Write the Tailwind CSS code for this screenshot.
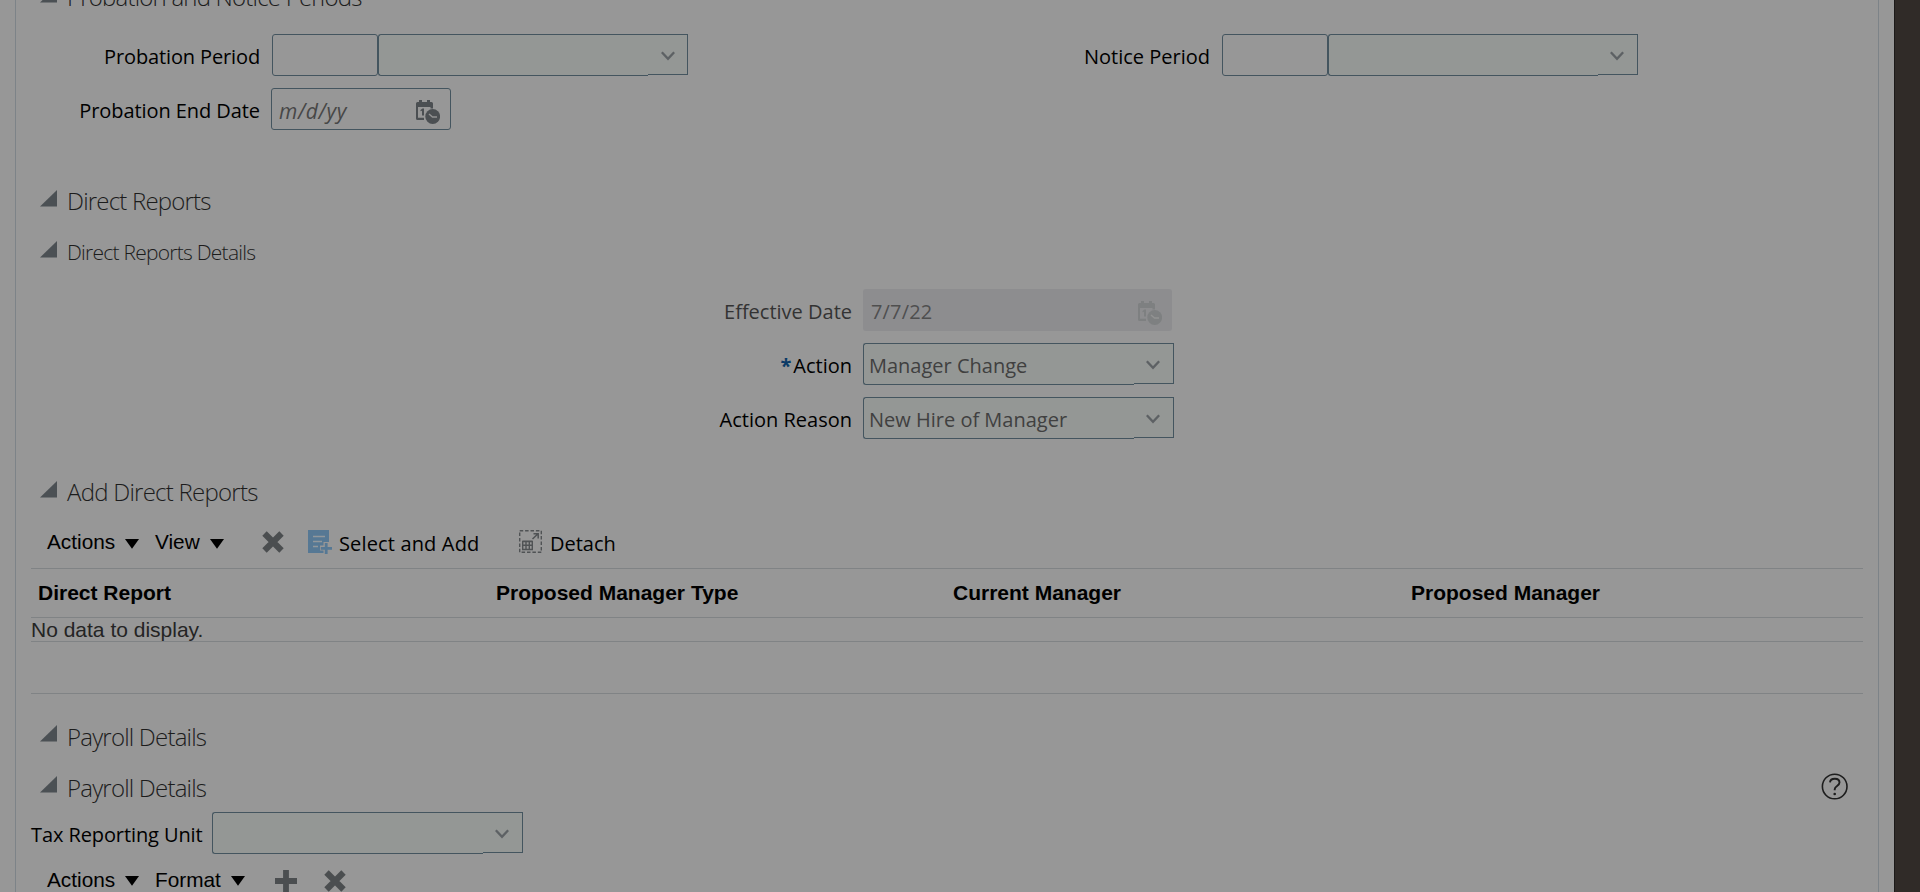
<!DOCTYPE html>
<html lang="en">
<head>
<meta charset="utf-8">
<title>Employment Details</title>
<script src="https://cdn.jsdelivr.net/npm/@tailwindcss/browser@4"></script>
</head>
<body class="h-[892px] overflow-hidden bg-[#302b28] font-['Open_Sans','Noto_Sans',sans-serif] text-[20px] text-black">
<svg class="hidden">
  <symbol id="tri" viewBox="0 0 17 17"><path d="M17 0V16.5H0Z" fill="#4b5054"/></symbol>
  <symbol id="chev" viewBox="0 0 14 10"><path d="M.8 1.200L7 7.800L13.200 1.200" fill="none" stroke="#5d6164" stroke-width="2.400"/></symbol>
  <symbol id="down" viewBox="0 0 14 10"><path d="M0 0H14L7 9.8Z" fill="#000"/></symbol>
  <symbol id="cross" viewBox="0 0 22 22"><path d="M2.500 2.500L19.500 19.500M19.500 2.500L2.500 19.500" stroke="#4b4e50" stroke-width="6.200"/></symbol>
  <symbol id="cal" viewBox="0 0 24 24">
    <path d="M0 3.500Q0 2 1.500 2H3V0H6V2H11V0H14V2H15.500Q17 2 17 3.500V8.500H14.500V7H2V17.700H8V20H1.500Q0 20 0 18.500Z" fill="currentColor"/>
    <path d="M4.500 10L6.500 8.500H8V15.500H6V10.700L4.500 11.300Z" fill="currentColor"/>
    <circle cx="16.700" cy="16.500" r="7.400" fill="currentColor"/>
    <path d="M13 14L16.500 17H21" fill="none" class="stroke-[#929292]" stroke-width="1.500"/>
  </symbol>
</svg>
<div class="flex h-full w-[1895px] border-r border-[#1c1a19] bg-[#979797] pl-[15px]">
  <main class="flex h-full w-[1864px] flex-col border-x border-[#7d8388] pr-[15px] pl-[15px]">

    <div class="-mt-[19px] flex h-8 shrink-0 pl-[9px] text-[24px] leading-8 font-light tracking-[-0.8px] text-[#1c1c1c]">
      <svg class="mt-[5px] mr-[10px] size-[17px]"><use href="#tri"/></svg><h2>Probation and Notice Periods</h2>
    </div>

    <div class="mt-[21px] flex h-[42px] shrink-0">
      <div class="w-[229px] pt-[2px] text-right leading-[42px] tracking-[-0.13px]">Probation Period</div>
      <div class="ml-[12px] w-[106px] rounded-[3px] border border-[#44555f]"></div>
      <div class="-ml-px flex w-[311px] pl-px">
        <div class="w-[271px] rounded-l-[3px] border border-r-0 border-[#44555f] bg-[#949795]"></div>
        <div class="flex h-[41px] w-10 border border-l-0 border-[#44555f] bg-[#949795] pt-[16px] pl-[13px]"><svg class="h-[10px] w-[14px]"><use href="#chev"/></svg></div>
      </div>
      <div class="w-[522px] pt-[2px] text-right leading-[42px]">Notice Period</div>
      <div class="ml-[12px] w-[106px] rounded-[3px] border border-[#44555f]"></div>
      <div class="-ml-px flex w-[311px] pl-px">
        <div class="w-[271px] rounded-l-[3px] border border-r-0 border-[#44555f] bg-[#949795]"></div>
        <div class="flex h-[41px] w-10 border border-l-0 border-[#44555f] bg-[#949795] pt-[16px] pl-[12px]"><svg class="h-[10px] w-[14px]"><use href="#chev"/></svg></div>
      </div>
    </div>

    <div class="mt-3 flex h-[42px] shrink-0">
      <div class="w-[229px] pt-[2px] text-right leading-[42px] tracking-[-0.07px]">Probation End Date</div>
      <div class="ml-[11px] flex w-[180px] justify-between rounded-[3px] border border-[#44555f] pr-[10px] pl-[7px]">
        <span class="pt-px text-[21px] leading-[42px] tracking-[0.6px] text-[#474747] italic">m/d/yy</span>
        <svg class="mt-[11px] size-6 text-[#4b4f52]"><use href="#cal"/></svg>
      </div>
    </div>

    <div class="mt-[55px] flex h-8 shrink-0 pl-[9px] text-[24px] leading-8 font-light tracking-[-0.8px] text-[#1c1c1c]">
      <svg class="mt-[5px] mr-[10px] size-[17px]"><use href="#tri"/></svg><h2>Direct Reports</h2>
    </div>
    <div class="mt-[19px] flex h-8 shrink-0 pl-[9px] text-[21px] leading-8 font-light tracking-[-0.75px] text-[#1c1c1c]">
      <svg class="mt-[5px] mr-[10px] size-[17px]"><use href="#tri"/></svg><h3>Direct Reports Details</h3>
    </div>

    <div class="mt-[21px] flex shrink-0 flex-col gap-3">
      <div class="flex h-[42px]">
        <div class="w-[821px] pt-[2px] text-right leading-[42px] text-[#333]">Effective Date</div>
        <div class="ml-[11px] flex w-[309px] justify-between rounded-[3px] bg-[#8d8d8f] pr-[10px] pl-[8px]">
          <span class="pt-[2px] leading-[42px] tracking-[0.15px] text-[#4f4f4f]">7/7/22</span>
          <svg class="mt-[12px] size-6 text-[#7e8081]"><use href="#cal"/></svg>
        </div>
      </div>
      <div class="flex h-[42px]">
        <div class="w-[821px] pt-[2px] text-right leading-[42px]"><span class="mr-[2px] font-bold text-[#0a3a66]">*</span>Action</div>
        <div class="ml-[11px] flex w-[311px]">
          <div class="w-[271px] rounded-l-[3px] border border-r-0 border-[#44555f] bg-[#949795] pt-px pl-[5px] leading-[42px] text-[#404040]">Manager Change</div>
          <div class="flex h-[41px] w-10 border border-l-0 border-[#44555f] bg-[#949795] pt-[16px] pl-[12px]"><svg class="h-[10px] w-[14px]"><use href="#chev"/></svg></div>
        </div>
      </div>
      <div class="flex h-[42px]">
        <div class="w-[821px] pt-[2px] text-right leading-[42px]">Action Reason</div>
        <div class="ml-[11px] flex w-[311px]">
          <div class="w-[271px] rounded-l-[3px] border border-r-0 border-[#44555f] bg-[#949795] pt-px pl-[5px] leading-[42px] text-[#404040]">New Hire of Manager</div>
          <div class="flex h-[41px] w-10 border border-l-0 border-[#44555f] bg-[#949795] pt-[16px] pl-[12px]"><svg class="h-[10px] w-[14px]"><use href="#chev"/></svg></div>
        </div>
      </div>
    </div>

    <div class="mt-[37px] flex h-8 shrink-0 pl-[9px] text-[24px] leading-8 font-light tracking-[-0.75px] text-[#1c1c1c]">
      <svg class="mt-[5px] mr-[10px] size-[17px]"><use href="#tri"/></svg><h2>Add Direct Reports</h2>
    </div>

    <div class="mt-[14px] flex h-[46px] shrink-0 pl-[16px] leading-10">
      <div class="flex w-[108px] font-['Liberation_Sans',sans-serif] text-[20.8px]"><span class="w-[78px]">Actions</span><svg class="mt-[17px] h-[10px] w-[14px]"><use href="#down"/></svg></div>
      <div class="flex w-[107px] font-['Liberation_Sans',sans-serif] text-[20.8px]"><span class="w-[55px]">View</span><svg class="mt-[17px] h-[10px] w-[14px]"><use href="#down"/></svg></div>
      <svg class="mt-[9px] mr-[24px] size-[22px]"><use href="#cross"/></svg>
      <svg class="mt-[8px] mr-[7px] h-6 w-6" viewBox="0 0 24 24">
        <path d="M0 0H21V12H15.500V15.500H12V20.500H15.500V23H0Z" fill="#567894"/>
        <path d="M5 6.500H17M5 11.500H14M5 16.500H10" stroke="#91979c" stroke-width="1.700"/>
        <path d="M18.200 13V24M12.800 18.300H24" stroke="#567894" stroke-width="2.800"/>
      </svg>
      <span class="w-[180px] pt-[2px] leading-[40px] tracking-[0.15px]">Select and Add</span>
      <svg class="mt-[8px] mr-[8px] h-[23px] w-[23px]" viewBox="0 0 23 23" fill="none" stroke="#505355">
        <path d="M.7 .7H22.300V22.300H.7Z" stroke-width="1.400" stroke-dasharray="3.500 1.900"/>
        <path d="M3.700 11.500H13.300V19.500H3.700ZM3.700 15.300H13.300M7 11.500V19.500M10.300 11.500V19.500M3.700 11.300H13.300" stroke-width="1.400"/>
        <path d="M13.500 9L19 3.800M14.500 3.700H19.200V8.500" stroke-width="1.500"/>
      </svg>
      <span class="pt-[2px] leading-[40px]">Detach</span>
    </div>

    <section class="flex h-[126px] w-[1832px] shrink-0 flex-col border-y border-[#808385] font-['Liberation_Sans',sans-serif] text-[21px]">
      <div class="grid h-[49px] grid-cols-4 border-b border-[#808385] leading-[48px] font-bold">
        <div class="pl-[7px]">Direct Report</div><div class="pl-[7px]">Proposed Manager Type</div><div class="pl-[6px]">Current Manager</div><div class="pl-[6px]">Proposed Manager</div>
      </div>
      <div class="h-[24px] border-b border-[#808385] leading-[24px] text-[#242424]">No data to display.</div>
    </section>

    <div class="mt-[27px] flex h-8 shrink-0 pl-[9px] text-[24px] leading-8 font-light tracking-[-0.8px] text-[#1c1c1c]">
      <svg class="mt-[4px] mr-[10px] size-[17px]"><use href="#tri"/></svg><h2>Payroll Details</h2>
    </div>
    <div class="mt-[19px] flex h-8 shrink-0 pr-[13px] pl-[9px] text-[24px] leading-8 font-light tracking-[-0.8px] text-[#1c1c1c]">
      <svg class="mt-[4px] mr-[10px] size-[17px]"><use href="#tri"/></svg><h2 class="grow">Payroll Details</h2>
      <svg class="mr-px size-7" viewBox="0 0 28 28" fill="none" stroke="#1d1d1d">
        <circle cx="13.700" cy="14.500" r="12.300" stroke-width="1.600"/>
        <path d="M9 10.300C9.500 5.500 18.500 5.500 18.500 10.600C18.500 14 13.700 14 13.700 17.300V18.300" stroke-width="1.900"/>
        <circle cx="13.700" cy="22" r="1.300" fill="#1d1d1d" stroke="none"/>
      </svg>
    </div>

    <div class="mt-[8px] flex h-[42px] shrink-0">
      <div class="w-[181px] pt-[2px] leading-[42px] tracking-[-0.1px]">Tax Reporting Unit</div>
      <div class="flex w-[311px]">
        <div class="w-[271px] rounded-l-[3px] border border-r-0 border-[#44555f] bg-[#949795]"></div>
        <div class="flex h-[41px] w-10 border border-l-0 border-[#44555f] bg-[#949795] pt-[16px] pl-[12px]"><svg class="h-[10px] w-[14px]"><use href="#chev"/></svg></div>
      </div>
    </div>

    <div class="mt-[6px] flex h-[40px] shrink-0 pl-[16px] font-['Liberation_Sans',sans-serif] text-[20.8px] leading-10">
      <div class="flex w-[108px]"><span class="w-[78px]">Actions</span><svg class="mt-[16px] h-[10px] w-[14px]"><use href="#down"/></svg></div>
      <div class="flex w-[120px]"><span class="w-[76px]">Format</span><svg class="mt-[16px] h-[10px] w-[14px]"><use href="#down"/></svg></div>
      <svg class="mt-[10px] mr-[27px] size-[22px]" viewBox="0 0 22 22"><path d="M11 0V22M0 11H22" stroke="#4b4e50" stroke-width="5.800"/></svg>
      <svg class="mt-[10px] size-[22px]"><use href="#cross"/></svg>
    </div>
  </main>
</div>
</body>
</html>
